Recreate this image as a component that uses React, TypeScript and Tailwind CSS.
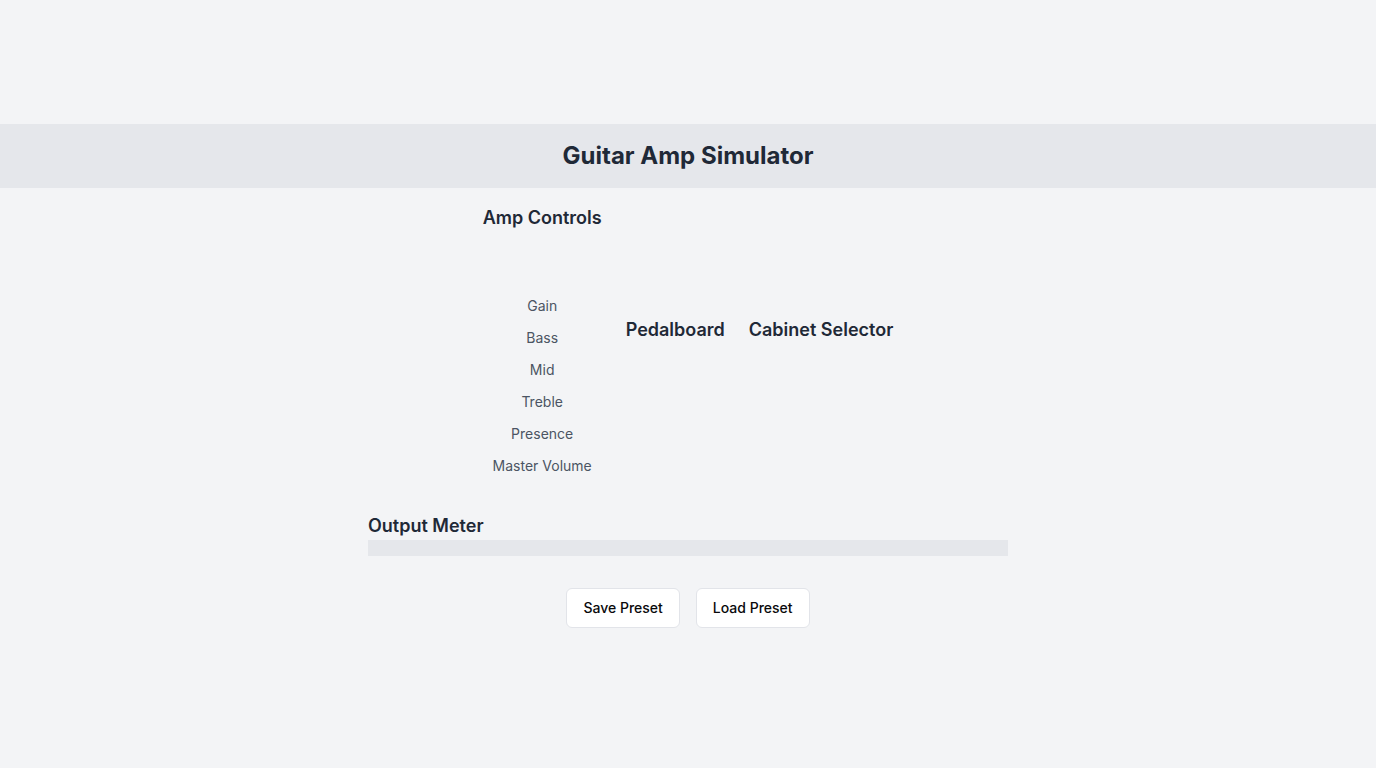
const controls = ["Gain", "Bass", "Mid", "Treble", "Presence", "Master Volume"];

const sectionTitle = "text-lg font-semibold text-[#1f2937]";

const presetButton =
  "h-10 rounded-md border border-[#e2e4e9] bg-white px-4 text-sm font-medium text-[#09090b]";

export default function App() {
  return (
    <div className="flex min-h-screen flex-col items-center justify-center bg-[#f3f4f6] font-['Inter',sans-serif]">
      <header className="flex h-16 w-full items-center justify-center bg-[#e5e7eb]">
        <h1 className="text-2xl font-bold text-[#1f2937]">Guitar Amp Simulator</h1>
      </header>
      <main className="flex w-full flex-col items-center p-4">
        <div className="flex items-center justify-center gap-6">
          <section className="flex flex-col items-center pb-1">
            <h2 className={sectionTitle}>Amp Controls</h2>
            <ul className="mt-16 flex flex-col items-center gap-3">
              {controls.map((name) => (
                <li key={name} className="text-sm text-[#4b5563]">
                  {name}
                </li>
              ))}
            </ul>
          </section>
          <section className="pb-6">
            <h2 className={sectionTitle}>Pedalboard</h2>
          </section>
          <section className="pb-6">
            <h2 className={sectionTitle}>Cabinet Selector</h2>
          </section>
        </div>
        <section className="mt-8 w-full max-w-[640px]">
          <h2 className={sectionTitle}>Output Meter</h2>
          <div className="h-4 w-full bg-[#e5e7eb]" />
        </section>
        <div className="mt-8 flex gap-4">
          <button type="button" className={presetButton}>
            Save Preset
          </button>
          <button type="button" className={presetButton}>
            Load Preset
          </button>
        </div>
      </main>
    </div>
  );
}
